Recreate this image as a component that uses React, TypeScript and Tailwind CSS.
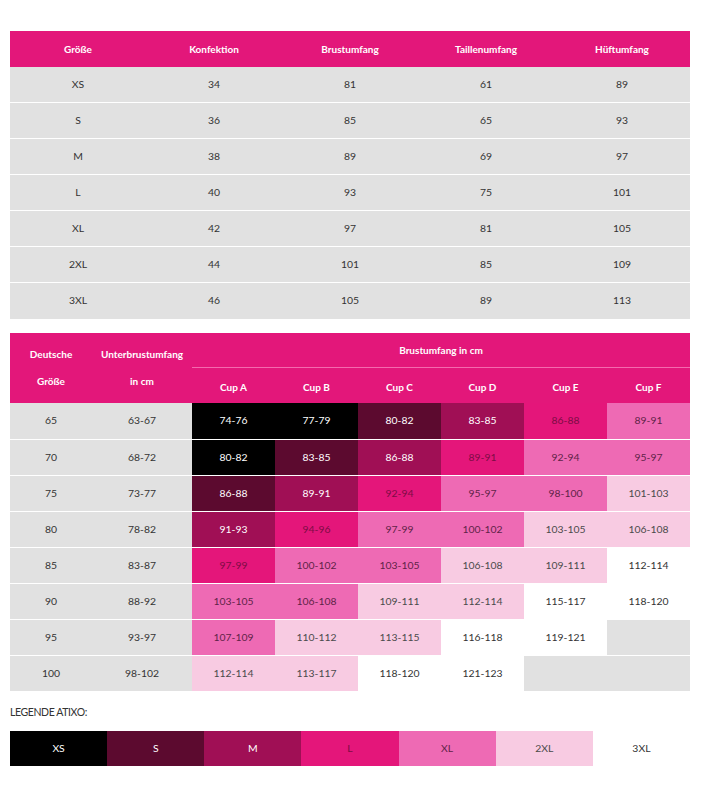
import React from "react";

const C: Record<string, string> = {
  XS: "bg-[#000000] text-white",
  S: "bg-[#5c0a2f] text-white",
  M: "bg-[#a00f55] text-white",
  L: "bg-[#e4167a] text-[#7d0c45]",
  XL: "bg-[#ee6ab4] text-[#5e2347]",
  "2XL": "bg-[#f8cbe2] text-[#4a4a4a]",
  "3XL": "bg-white text-[#333333]",
  G: "bg-[#e1e1e1] text-[#333333]",
};

const top = [
  ["XS", "34", "81", "61", "89"],
  ["S", "36", "85", "65", "93"],
  ["M", "38", "89", "69", "97"],
  ["L", "40", "93", "75", "101"],
  ["XL", "42", "97", "81", "105"],
  ["2XL", "44", "101", "85", "109"],
  ["3XL", "46", "105", "89", "113"],
];

type Cell = [string, string];
const bra: { g: string; u: string; cups: Cell[] }[] = [
  { g: "65", u: "63-67", cups: [["74-76", "XS"], ["77-79", "XS"], ["80-82", "S"], ["83-85", "M"], ["86-88", "L"], ["89-91", "XL"]] },
  { g: "70", u: "68-72", cups: [["80-82", "XS"], ["83-85", "S"], ["86-88", "M"], ["89-91", "L"], ["92-94", "XL"], ["95-97", "XL"]] },
  { g: "75", u: "73-77", cups: [["86-88", "S"], ["89-91", "M"], ["92-94", "L"], ["95-97", "XL"], ["98-100", "XL"], ["101-103", "2XL"]] },
  { g: "80", u: "78-82", cups: [["91-93", "M"], ["94-96", "L"], ["97-99", "XL"], ["100-102", "XL"], ["103-105", "2XL"], ["106-108", "2XL"]] },
  { g: "85", u: "83-87", cups: [["97-99", "L"], ["100-102", "XL"], ["103-105", "XL"], ["106-108", "2XL"], ["109-111", "2XL"], ["112-114", "3XL"]] },
  { g: "90", u: "88-92", cups: [["103-105", "XL"], ["106-108", "XL"], ["109-111", "2XL"], ["112-114", "2XL"], ["115-117", "3XL"], ["118-120", "3XL"]] },
  { g: "95", u: "93-97", cups: [["107-109", "XL"], ["110-112", "2XL"], ["113-115", "2XL"], ["116-118", "3XL"], ["119-121", "3XL"], ["", "G"]] },
  { g: "100", u: "98-102", cups: [["112-114", "2XL"], ["113-117", "2XL"], ["118-120", "3XL"], ["121-123", "3XL"], ["", "G"], ["", "G"]] },
];

const legend = ["XS", "S", "M", "L", "XL", "2XL", "3XL"];

export default function App() {
  return (
    <div className="w-[707px] min-h-[800px] bg-white px-[10px] pt-[31px] text-[10.4px] text-[#333333] [font-family:Lato,'Liberation_Sans',sans-serif]">
      <div className="w-[680px]">
        {/* Table 1 */}
        <div className="grid grid-cols-5 h-[36px] bg-[#e3177a] text-white font-bold text-[10px]">
          {["Größe", "Konfektion", "Brustumfang", "Taillenumfang", "Hüftumfang"].map((h) => (
            <div key={h} className="flex items-center justify-center">{h}</div>
          ))}
        </div>
        {top.map((r, i) => (
          <div key={i} className={`grid grid-cols-5 h-[36px] bg-[#e1e1e1] ${i < top.length - 1 ? "border-b border-white" : ""}`}>
            {r.map((c, j) => (
              <div key={j} className="flex items-center justify-center">{c}</div>
            ))}
          </div>
        ))}

        {/* Table 2 */}
        <div className="mt-[14px]">
          <div className="grid grid-cols-[82px_100px_repeat(6,1fr)] grid-rows-[35px_35px] bg-[#e3177a] text-white font-bold text-[10px]">
            <div className="row-span-2 flex items-center justify-center text-center leading-[27px] whitespace-nowrap">
              Deutsche<br />Größe
            </div>
            <div className="row-span-2 flex items-center justify-center text-center leading-[27px] whitespace-nowrap">
              Unterbrustumfang<br />in cm
            </div>
            <div className="col-span-6 flex items-center justify-center border-b border-[#f46aae]">Brustumfang in cm</div>
            {["Cup A", "Cup B", "Cup C", "Cup D", "Cup E", "Cup F"].map((h) => (
              <div key={h} className="flex items-center justify-center pt-[4px]">{h}</div>
            ))}
          </div>
          {bra.map((r, i) => (
            <div key={i} className={`grid grid-cols-[82px_100px_repeat(6,1fr)] h-[36px] ${i > 0 ? "border-t border-white" : ""}`}>
              <div className="flex items-center justify-center bg-[#e1e1e1]">{r.g}</div>
              <div className="flex items-center justify-center bg-[#e1e1e1]">{r.u}</div>
              {r.cups.map(([v, k], j) => (
                <div key={j} className={`flex items-center justify-center ${C[k]}`}>{v}</div>
              ))}
            </div>
          ))}
        </div>

        {/* Legend */}
        <div className="mt-[14px] h-[14px] text-[10.5px] leading-[14px] text-[#333333] tracking-[-0.4px]">LEGENDE ATIXO:</div>
        <div className="mt-[12px] grid grid-cols-7 h-[35px]">
          {legend.map((k) => (
            <div key={k} className={`flex items-center justify-center ${C[k]}`}>{k}</div>
          ))}
        </div>
      </div>
    </div>
  );
}
